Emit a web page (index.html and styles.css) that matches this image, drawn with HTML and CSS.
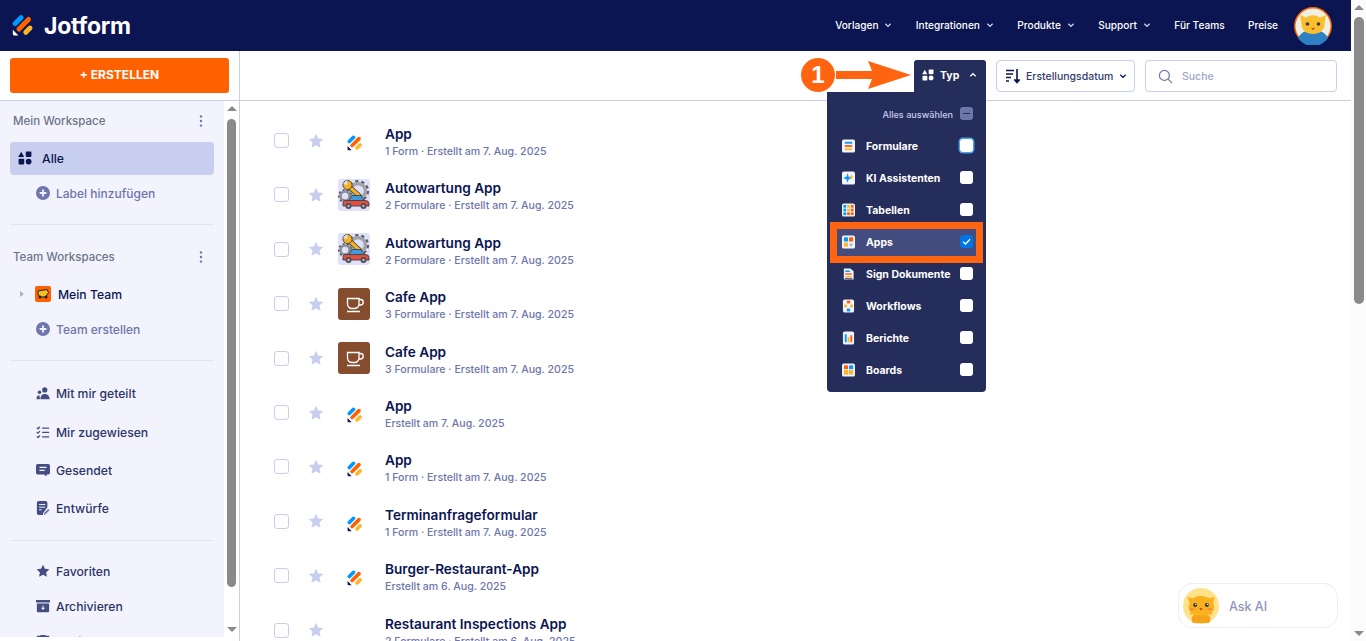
FILE: index.html
```html
<!DOCTYPE html>
<html lang="de">
<head>
<meta charset="utf-8">
<title>Jotform – Meine Apps</title>
<link rel="stylesheet" href="styles.css">
</head>
<body>
<svg class="defs" aria-hidden="true">
  <defs>
    <symbol id="logo" viewBox="0 0 22 22">
      <path d="M3.200 9 9 3.200" stroke="#0099ff" stroke-width="5" stroke-linecap="round" fill="none"/>
      <path d="M7 14.500 16.500 5" stroke="#ff6100" stroke-width="5" stroke-linecap="round" fill="none"/>
      <path d="M13.800 17.800 18 13.600" stroke="#ffb629" stroke-width="5" stroke-linecap="round" fill="none"/>
      <path d="M.8 15.200 6.400 20.900H2.200A1.400 1.400 0 0 1 .8 19.500Z" fill="currentColor"/>
    </symbol>
    <symbol id="star" viewBox="0 0 16 16">
      <path d="M8 .8l2.200 4.700 5.100.6-3.800 3.500 1 5.100L8 12.200l-4.500 2.500 1-5.100L.7 6.100l5.100-.6z" fill="currentColor"/>
    </symbol>
    <symbol id="shapes" viewBox="0 0 14 14">
      <path d="M3.200.8 6.200 6H.2z" fill="currentColor"/>
      <rect x="7.800" y=".6" width="5.600" height="5.400" rx="1" fill="currentColor"/>
      <rect x=".6" y="7.800" width="5.600" height="5.600" rx="1" fill="currentColor"/>
      <circle cx="10.600" cy="10.600" r="2.900" fill="currentColor"/>
    </symbol>
    <symbol id="plus" viewBox="0 0 14 14">
      <circle cx="7" cy="7" r="7" fill="#6e76aa"/>
      <path d="M7 3.600v6.800M3.600 7h6.800" stroke="#f3f3fe" stroke-width="1.800"/>
    </symbol>
    <symbol id="kebab" viewBox="0 0 4 14">
      <circle cx="2" cy="2.400" r="1.200" fill="#6e76aa"/><circle cx="2" cy="7" r="1.200" fill="#6e76aa"/><circle cx="2" cy="11.600" r="1.200" fill="#6e76aa"/>
    </symbol>
    <symbol id="chev" viewBox="0 0 8 6">
      <path d="M1.300 1.700 4 4.300 6.700 1.700" fill="none" stroke="currentColor" stroke-width="1.200"/>
    </symbol>
    <symbol id="cat" viewBox="0 0 40 40">
      <circle cx="20" cy="20" r="20" fill="#ffe28a"/>
      <path d="M12 30c-3 2-3 6-1 9h18c2-3 2-7-1-9z" fill="#f5a31a"/>
      <path d="M5 10l6 1.500a15 15 0 0 1 18 0L35 10l-1.500 7c2 3 1.500 7-.5 9l-1.500 4-3-1-2.500 3-3-2.500-3 2.500-3-2.500-3 2.500-2.500-3-3 1L8 26c-2-2-2.500-6-.5-9z" fill="#f9b11f"/>
      <circle cx="13.500" cy="19" r="2.200" fill="#3a3a4a"/><circle cx="26.500" cy="19" r="2.200" fill="#3a3a4a"/>
      <circle cx="14.200" cy="18.300" r=".7" fill="#fff"/><circle cx="27.200" cy="18.300" r=".7" fill="#fff"/>
      <path d="M18 22.500h4l-2 2.400z" fill="#a8431a"/>
      <ellipse cx="10" cy="23.500" rx="2.400" ry="1.400" fill="#f98a3c"/><ellipse cx="30" cy="23.500" rx="2.400" ry="1.400" fill="#f98a3c"/>
    </symbol>
    <symbol id="car" viewBox="0 0 32 32">
      <rect width="32" height="32" rx="3" fill="#dfe1fb"/>
      <circle cx="20" cy="12" r="9.500" fill="none" stroke="#55565e" stroke-width="3" stroke-dasharray="3 2.970"/>
      <circle cx="20" cy="12" r="7.500" fill="#dfe1fb" stroke="#a2a4aa" stroke-width="3.500"/>
      <circle cx="7" cy="17" r="6" fill="none" stroke="#55565e" stroke-width="2" stroke-dasharray="2 2.190"/>
      <circle cx="7" cy="17" r="4.500" fill="#dfe1fb" stroke="#8b8d93" stroke-width="2.500"/>
      <path d="M11 7.500 21.500 17" stroke="#3f4048" stroke-width="5" stroke-linecap="round"/>
      <path d="M11 7.500 21.500 17" stroke="#f5b21e" stroke-width="3.200" stroke-linecap="round"/>
      <circle cx="9.500" cy="6" r="4.600" fill="#f5b21e" stroke="#3f4048" stroke-width=".9"/>
      <path d="M9 1 9.500 6 5 5z" fill="#dfe1fb"/>
      <path d="M10.500 22 14 16.500h9l3.500 5.500z" fill="#3b9ddd" stroke="#3f4048" stroke-width=".9"/>
      <path d="M5 23.500Q5 21.500 8 21.500H27Q31 21.500 31 24.500V27H5z" fill="#e2503c" stroke="#3f4048" stroke-width=".9"/>
      <circle cx="10.500" cy="27" r="3" fill="#4c4d55"/><circle cx="25.500" cy="27" r="3" fill="#4c4d55"/>
      <circle cx="10.500" cy="27" r="1.200" fill="#b9bbc2"/><circle cx="25.500" cy="27" r="1.200" fill="#b9bbc2"/>
    </symbol>
    <symbol id="cafe" viewBox="0 0 32 32">
      <rect width="32" height="32" rx="3" fill="#854c2e"/>
      <path d="M9.500 10.500h11.500v5.500a4.500 4.500 0 0 1-4.500 4.500h-2.500a4.500 4.500 0 0 1-4.500-4.500zM21 11.500h1.500a2.300 2.300 0 0 1 0 5.500H21M9 23.500h13" fill="none" stroke="#fff" stroke-width="1.300"/>
    </symbol>
    <symbol id="m-form" viewBox="0 0 14 14">
      <rect width="14" height="14" rx="2" fill="#f3f3fe"/>
      <path d="M3 3.500h8" stroke="#0099ff" stroke-width="2"/><path d="M3 7h8" stroke="#ff6100" stroke-width="2"/><path d="M3 10.500h8" stroke="#ffb629" stroke-width="2"/>
    </symbol>
    <symbol id="m-ai" viewBox="0 0 14 14">
      <rect width="14" height="14" rx="2" fill="#f3f3fe"/>
      <path d="M6 2 7.300 5.700 11 7 7.300 8.300 6 12 4.700 8.300 1 7 4.700 5.700z" fill="#0099ff"/>
      <path d="M10 3 10.800 5.200 13 6 10.800 6.800 10 9 9.200 6.800 7 6 9.200 5.200z" fill="#ffb629"/>
    </symbol>
    <symbol id="m-table" viewBox="0 0 14 14">
      <rect width="14" height="14" rx="2" fill="#f3f3fe"/>
      <g fill="#ffb629"><rect x="5.500" y="1.500" width="3" height="3"/><rect x="5.500" y="5.500" width="3" height="3"/></g>
      <g fill="#0099ff"><rect x="1.500" y="1.500" width="3" height="3"/><rect x="1.500" y="5.500" width="3" height="3"/><rect x="1.500" y="9.500" width="3" height="3"/></g>
      <g fill="#ff6100"><rect x="9.500" y="1.500" width="3" height="3"/><rect x="9.500" y="5.500" width="3" height="3"/><rect x="9.500" y="9.500" width="3" height="3"/><rect x="5.500" y="9.500" width="3" height="3"/></g>
    </symbol>
    <symbol id="m-apps" viewBox="0 0 14 14">
      <rect width="14" height="14" rx="2" fill="#f3f3fe"/>
      <rect x="2" y="2" width="4.500" height="4.500" rx=".6" fill="#0099ff"/><rect x="7.500" y="2" width="4.500" height="4.500" rx=".6" fill="#ff6100"/>
      <rect x="2" y="7.500" width="4.500" height="4.500" rx=".6" fill="#ffb629"/><path d="M9.750 8v4M7.750 10h4" stroke="#a9aecb" stroke-width="1.200"/>
    </symbol>
    <symbol id="m-sign" viewBox="0 0 14 14">
      <path d="M2 1h7l3.500 3v9H2z" fill="#f3f3fe"/>
      <path d="M3.500 4h5" stroke="#0099ff" stroke-width="1.600"/><path d="M3.500 7h7" stroke="#ff6100" stroke-width="1.600"/><path d="M3.500 10h7" stroke="#ffb629" stroke-width="1.600"/><path d="M3 12.300c2-1.500 4 1 8-.5" stroke="#0a1551" stroke-width=".9" fill="none"/>
    </symbol>
    <symbol id="m-flow" viewBox="0 0 14 14">
      <rect x="1" width="12" height="14" rx="2" fill="#f3f3fe"/>
      <rect x="5.200" y="1.200" width="3.600" height="3" fill="#ff6100"/><rect x="2.300" y="5.500" width="3" height="3" fill="#ffb629"/><rect x="8.700" y="5.500" width="3" height="3" fill="#ffb629"/><rect x="5.200" y="9.800" width="3.600" height="3" fill="#0099ff"/>
    </symbol>
    <symbol id="m-report" viewBox="0 0 14 14">
      <rect x="1" width="12" height="14" rx="2" fill="#f3f3fe"/>
      <rect x="3" y="3" width="2" height="8.500" fill="#0099ff"/><rect x="6" y="6" width="2" height="5.500" fill="#ffb629"/><rect x="9" y="4" width="2" height="7.500" fill="#ff6100"/>
    </symbol>
    <symbol id="m-board" viewBox="0 0 14 14">
      <rect width="14" height="14" rx="2" fill="#f3f3fe"/>
      <rect x="2" y="2" width="4.500" height="4" fill="#ff6100"/><rect x="7.500" y="2" width="4.500" height="4" fill="#0099ff"/><rect x="2" y="7" width="4.500" height="5" fill="#ffb629"/><rect x="7.500" y="7" width="4.500" height="5" fill="#ffb629"/>
    </symbol>
  </defs>
</svg>

<div class="page">
  <div class="main">
    <header class="topbar">
      <div class="brand">
        <svg class="brand-logo"><use href="#logo"/></svg>
        <span class="brand-name">Jotform</span>
      </div>
      <nav class="topnav">
        <a class="topnav-link">Vorlagen <svg class="chev"><use href="#chev"/></svg></a>
        <a class="topnav-link">Integrationen <svg class="chev"><use href="#chev"/></svg></a>
        <a class="topnav-link">Produkte <svg class="chev"><use href="#chev"/></svg></a>
        <a class="topnav-link">Support <svg class="chev"><use href="#chev"/></svg></a>
        <a class="topnav-link">Für Teams</a>
        <a class="topnav-link">Preise</a>
      </nav>
      <div class="avatar">
        <svg viewBox="0 0 38 38" class="avatar-svg">
          <circle cx="19" cy="19" r="18.200" fill="#eef0e4" stroke="#ff6100" stroke-width="1.400"/>
          <path d="M4 31c3-6 9-8 15-8s12 2 15 8a18 18 0 0 1-30 0Z" fill="#2f7fc4"/>
          <path d="M6 8l6 2.500a13 13 0 0 1 14 0L32 8l-1.500 9c.5 6-5 10-11.500 10S7 23 7.500 17Z" fill="#fbbf2d"/>
          <circle cx="13.500" cy="17" r="1.800" fill="#3a3a4a"/><circle cx="24.500" cy="17" r="1.800" fill="#3a3a4a"/>
          <path d="M17 21h4l-2 2z" fill="#a8431a"/>
        </svg>
      </div>
    </header>

    <div class="workspace">
      <aside class="sidebar">
        <div class="create-wrap"><button class="create-btn">+ ERSTELLEN</button></div>
        <div class="side-body">
          <div class="side-nav">
            <div class="side-head"><span>Mein Workspace</span><svg class="kebab"><use href="#kebab"/></svg></div>
            <div class="side-active"><svg class="side-active-icon"><use href="#shapes"/></svg>Alle</div>
            <div class="side-add"><svg class="side-icon-sm"><use href="#plus"/></svg>Label hinzufügen</div>
            <hr class="side-rule rule-a">
            <div class="side-head head-team"><span>Team Workspaces</span><svg class="kebab"><use href="#kebab"/></svg></div>
            <div class="side-team">
              <span class="caret"></span>
              <svg class="team-icon" viewBox="0 0 16 16"><rect width="16" height="16" rx="2" fill="#ff6100"/><path d="M3 5l9-1.500 1.500 3-3 4.500H5L3 8z" fill="#f5c21e" stroke="#222" stroke-width="1"/><circle cx="5" cy="11" r="1.500" fill="#222"/><circle cx="11" cy="11" r="1.500" fill="#222"/></svg>
              Mein Team
            </div>
            <div class="side-add add-team"><svg class="side-icon-sm"><use href="#plus"/></svg>Team erstellen</div>
            <hr class="side-rule rule-b">
            <div class="side-link link-shared">
              <svg class="side-icon" viewBox="0 0 16 16"><circle cx="10" cy="4.500" r="3" fill="#454e80"/><path d="M5 15c0-4 2-6 5-6s5.500 2 5.500 6z" fill="#454e80"/><circle cx="4" cy="7" r="2" fill="#454e80"/><path d="M.5 15c0-3 1-4.500 3.500-4.500l.5 4.500z" fill="#454e80"/></svg>
              Mit mir geteilt
            </div>
            <div class="side-link link-first">
              <svg class="side-icon" viewBox="0 0 16 16"><path d="M1 3l1.300 1.300L4.500 2M1 8l1.300 1.300L4.500 7M1 13l1.300 1.300L4.500 12M7 3.500h8M7 8.500h8M7 13.500h8" fill="none" stroke="#454e80" stroke-width="1.400"/></svg>
              Mir zugewiesen
            </div>
            <div class="side-link link-tall">
              <svg class="side-icon" viewBox="0 0 16 16"><path d="M2 1h12a2 2 0 0 1 2 2v8a2 2 0 0 1-2 2h-2v2.500L9 13H2a2 2 0 0 1-2-2V3a2 2 0 0 1 2-2Z" fill="#454e80"/><path d="M4 5h8M4 8.500h6" stroke="#f3f3fe" stroke-width="1.300"/></svg>
              Gesendet
            </div>
            <div class="side-link link-tall">
              <svg class="side-icon" viewBox="0 0 16 16"><path d="M3 0h8a2 2 0 0 1 2 2v5l-5 7v2H3a2 2 0 0 1-2-2V2a2 2 0 0 1 2-2Z" fill="#454e80"/><path d="M3.500 4h7M3.500 7h7M3.500 10h3" stroke="#f3f3fe" stroke-width="1.100"/><path d="M9 14l5-5 1.500 1.500-5 5H9z" fill="#6e76aa"/></svg>
              Entwürfe
            </div>
            <hr class="side-rule rule-c">
            <div class="side-link">
              <svg class="side-icon" viewBox="0 0 16 16"><use href="#star" color="#454e80"/></svg>
              Favoriten
            </div>
            <div class="side-link link-archive">
              <svg class="side-icon" viewBox="0 0 16 16"><rect y="1" width="16" height="3" rx=".5" fill="#454e80"/><path d="M1 5h14v9a1 1 0 0 1-1 1H2a1 1 0 0 1-1-1z" fill="#454e80"/><path d="M8 7.500v4M6.200 10 8 11.800 9.800 10" stroke="#f3f3fe" stroke-width="1.200" fill="none"/></svg>
              Archivieren
            </div>
            <div class="side-link link-archive">
              <svg class="side-icon" viewBox="0 0 16 16"><path d="M5 2V1h6v1h4v2H1V2z" fill="#454e80"/><path d="M2 5h12l-1 11H3z" fill="#454e80"/></svg>
              Papierkorb
            </div>
          </div>
          <div class="scrollbar side-scrollbar">
            <span class="arrow-up"></span>
            <span class="thumb side-thumb"></span>
            <span class="arrow-down"></span>
          </div>
        </div>
      </aside>

      <section class="content">
        <div class="toolbar">
          <div class="type-wrap">
            <button class="type-btn"><svg class="type-icon"><use href="#shapes"/></svg>Typ<svg class="chev chev-up"><use href="#chev"/></svg></button>
            <div class="type-menu">
              <div class="menu-all"><span>Alles auswählen</span><span class="box box-mixed"></span></div>
              <div class="menu-row"><svg class="menu-icon"><use href="#m-form"/></svg><span class="menu-label">Formulare</span><span class="box box-focus"></span></div>
              <div class="menu-row"><svg class="menu-icon"><use href="#m-ai"/></svg><span class="menu-label">KI Assistenten</span><span class="box"></span></div>
              <div class="menu-row"><svg class="menu-icon"><use href="#m-table"/></svg><span class="menu-label">Tabellen</span><span class="box"></span></div>
              <div class="menu-row menu-row-on"><svg class="menu-icon"><use href="#m-apps"/></svg><span class="menu-label">Apps</span><span class="box box-on"><svg viewBox="0 0 13 13" class="box-check"><path d="M3 6.800 5.500 9 10 4.200" fill="none" stroke="#fff" stroke-width="1.300"/></svg></span></div>
              <div class="menu-row"><svg class="menu-icon"><use href="#m-sign"/></svg><span class="menu-label">Sign Dokumente</span><span class="box"></span></div>
              <div class="menu-row"><svg class="menu-icon"><use href="#m-flow"/></svg><span class="menu-label">Workflows</span><span class="box"></span></div>
              <div class="menu-row"><svg class="menu-icon"><use href="#m-report"/></svg><span class="menu-label">Berichte</span><span class="box"></span></div>
              <div class="menu-row"><svg class="menu-icon"><use href="#m-board"/></svg><span class="menu-label">Boards</span><span class="box"></span></div>
              <span class="highlight"></span>
            </div>
            <div class="callout">
              <span class="callout-num">1</span>
              <svg class="callout-arrow" viewBox="0 0 75 28"><path d="M0 10h36L32 0l43 14-43 14 4-10H0z" fill="#ff6511"/></svg>
            </div>
          </div>
          <button class="sort-btn">
            <svg class="sort-icon" viewBox="0 0 16 16"><path d="M1 2.500h8M1 6h7M1 9.500h5M1 13h3" stroke="#0a1551" stroke-width="1.500"/><path d="M12 1v13M9.300 11.500 12 14.500l2.700-3" stroke="#0a1551" stroke-width="1.600" fill="#0a1551"/></svg>
            Erstellungsdatum<svg class="chev chev-dark"><use href="#chev"/></svg>
          </button>
          <div class="search">
            <svg class="search-icon" viewBox="0 0 16 16"><circle cx="6.800" cy="6.800" r="5.300" fill="none" stroke="#6e76aa" stroke-width="1.300"/><path d="M10.800 10.800 15 15" stroke="#6e76aa" stroke-width="1.300"/></svg>
            <span>Suche</span>
          </div>
        </div>

        <div class="list">
          <div class="row"><span class="check"></span><svg class="row-star"><use href="#star"/></svg><svg class="row-logo"><use href="#logo"/></svg><div class="row-text"><div class="row-title">App</div><div class="row-sub">1 Form · Erstellt am 7. Aug. 2025</div></div></div>
          <div class="row"><span class="check"></span><svg class="row-star"><use href="#star"/></svg><svg class="row-img"><use href="#car"/></svg><div class="row-text"><div class="row-title">Autowartung App</div><div class="row-sub">2 Formulare · Erstellt am 7. Aug. 2025</div></div></div>
          <div class="row"><span class="check"></span><svg class="row-star"><use href="#star"/></svg><svg class="row-img"><use href="#car"/></svg><div class="row-text"><div class="row-title">Autowartung App</div><div class="row-sub">2 Formulare · Erstellt am 7. Aug. 2025</div></div></div>
          <div class="row"><span class="check"></span><svg class="row-star"><use href="#star"/></svg><svg class="row-img"><use href="#cafe"/></svg><div class="row-text"><div class="row-title">Cafe App</div><div class="row-sub">3 Formulare · Erstellt am 7. Aug. 2025</div></div></div>
          <div class="row"><span class="check"></span><svg class="row-star"><use href="#star"/></svg><svg class="row-img"><use href="#cafe"/></svg><div class="row-text"><div class="row-title">Cafe App</div><div class="row-sub">3 Formulare · Erstellt am 7. Aug. 2025</div></div></div>
          <div class="row"><span class="check"></span><svg class="row-star"><use href="#star"/></svg><svg class="row-logo"><use href="#logo"/></svg><div class="row-text"><div class="row-title">App</div><div class="row-sub">Erstellt am 7. Aug. 2025</div></div></div>
          <div class="row"><span class="check"></span><svg class="row-star"><use href="#star"/></svg><svg class="row-logo"><use href="#logo"/></svg><div class="row-text"><div class="row-title">App</div><div class="row-sub">1 Form · Erstellt am 7. Aug. 2025</div></div></div>
          <div class="row"><span class="check"></span><svg class="row-star"><use href="#star"/></svg><svg class="row-logo"><use href="#logo"/></svg><div class="row-text"><div class="row-title">Terminanfrageformular</div><div class="row-sub">1 Form · Erstellt am 7. Aug. 2025</div></div></div>
          <div class="row"><span class="check"></span><svg class="row-star"><use href="#star"/></svg><svg class="row-logo"><use href="#logo"/></svg><div class="row-text"><div class="row-title">Burger-Restaurant-App</div><div class="row-sub">Erstellt am 6. Aug. 2025</div></div></div>
          <div class="row"><span class="check"></span><svg class="row-star"><use href="#star"/></svg><span class="row-blank"></span><div class="row-text"><div class="row-title">Restaurant Inspections App</div><div class="row-sub">2 Formulare · Erstellt am 6. Aug. 2025</div></div></div>
        </div>
      </section>
    </div>
  </div>

  <div class="scrollbar page-scrollbar">
    <span class="arrow-up"></span>
    <span class="thumb page-thumb"></span>
    <span class="arrow-down"></span>
  </div>
</div>

<div class="ask-ai"><svg class="ask-cat"><use href="#cat"/></svg><span class="ask-label">Ask AI</span></div>
</body>
</html>
```

FILE: styles.css
```css
* { box-sizing: border-box; }
html, body { margin: 0; height: 641px; overflow: hidden; }
body { font-family: Inter, "Open Sans", sans-serif; color: #0a1551; background: #fff; position: relative; }
button { font-family: inherit; cursor: pointer; }
.defs { width: 0; height: 0; position: absolute; }

.page { display: flex; height: 641px; }
.main { width: 1351px; display: flex; flex-direction: column; height: 641px; overflow: hidden; }

.topbar { height: 51px; background: #0a1551; display: flex; align-items: center; padding: 0 19px 0 12px; flex: none; }
.brand { display: flex; align-items: center; gap: 10px; color: #fff; }
.brand-logo { width: 22px; height: 23px; color: #fff; }
.brand-name { font-size: 23px; font-weight: 700; letter-spacing: -.25px; line-height: 26px; }
.topnav { margin-left: auto; display: flex; align-items: center; gap: 23.4px; padding-bottom: 1px; }
.topnav-link { color: #fff; font-size: 10.1px; font-weight: 500; display: flex; align-items: center; gap: 6px; white-space: nowrap; }
.chev { width: 8px; height: 6px; color: #c8ceed; }
.avatar { margin-left: 16px; width: 38px; height: 38px; }
.avatar-svg { width: 38px; height: 38px; display: block; }

.workspace { flex: 1; display: flex; min-height: 0; }
.sidebar { width: 240px; flex: none; border-right: 1px solid #c8ceed; display: flex; flex-direction: column; }
.create-wrap { height: 50px; padding: 7px 10px 0; border-bottom: 1px solid #c8ceed; flex: none; }
.create-btn { width: 219px; height: 35px; background: #ff6100; color: #fff; border: 0; border-radius: 3px; font-size: 12px; font-weight: 700; padding: 0 0 2px; }
.side-body { flex: 1; display: flex; min-height: 0; height: 536px; margin-bottom: 4px; }
.side-nav { width: 224px; background: #f3f3fe; padding: 0 10px; overflow: hidden; }
.side-head { height: 20px; margin: 10px 0 11px; display: flex; align-items: center; justify-content: space-between; padding: 0 11px 0 3px; font-size: 11.5px; font-weight: 500; color: #6c7386; }
.head-team { margin: 22px 0 0; }
.kebab { width: 4px; height: 14px; }
.side-active { height: 33px; background: #c8ceed; border-radius: 4px; display: flex; align-items: center; gap: 10px; padding: 0 0 1px 8px; font-size: 12.2px; font-weight: 500; }
.side-active-icon { width: 14px; height: 14px; color: #0a1551; }
.side-add { height: 18px; margin-top: 9px; display: flex; align-items: center; gap: 6px; padding-left: 26px; color: #6e76aa; font-size: 12px; font-weight: 500; }
.add-team { margin-top: 17px; }
.side-icon-sm { width: 14px; height: 14px; }
.side-rule { border: 0; border-top: 1px solid #e3e5ec; margin: 0; }
.rule-a { margin-top: 22px; }
.rule-b { margin-top: 22px; }
.rule-c { margin-top: 23px; margin-bottom: 21px; }
.side-team { height: 18px; margin-top: 18px; display: flex; align-items: center; padding-left: 10px; font-size: 12.2px; font-weight: 500; }
.caret { width: 0; height: 0; border-left: 4px solid #a9aecb; border-top: 3px solid transparent; border-bottom: 3px solid transparent; margin-right: 11px; }
.team-icon { width: 16px; height: 16px; margin-right: 7px; }
.side-link { height: 18px; display: flex; align-items: center; gap: 6px; padding-left: 26px; font-size: 12.2px; font-weight: 500; color: #2c3566; }
.link-shared { margin-top: 23px; }
.link-first { margin-top: 21px; }
.link-tall { margin-top: 20px; }
.link-archive { margin-top: 17px; }
.side-icon { width: 14px; height: 14px; flex: none; }

.scrollbar { width: 15px; flex: none; background: #fff; display: flex; flex-direction: column; align-items: center; }
.side-scrollbar { padding-top: 5px; }
.arrow-up { width: 0; height: 0; border-left: 5px solid transparent; border-right: 5px solid transparent; border-bottom: 5px solid #8a8a8a; flex: none; }
.arrow-down { width: 0; height: 0; border-left: 5px solid transparent; border-right: 5px solid transparent; border-top: 5px solid #8a8a8a; flex: none; margin-top: auto; margin-bottom: 5px; }
.thumb { width: 9px; background: #8a8a8a; border-radius: 5px; flex: none; }
.side-thumb { height: 468px; margin-top: 8px; }
.page-scrollbar { background: #fbfbfb; padding-top: 5px; }
.page-thumb { height: 287px; margin-top: 7px; width: 10px; }

.content { flex: 1; display: flex; flex-direction: column; min-width: 0; }
.toolbar { height: 50px; flex: none; border-bottom: 1px solid #c8ceed; padding: 9px 14px 0 0; display: flex; justify-content: flex-end; align-items: flex-start; gap: 10px; }
.type-wrap { position: relative; width: 72px; }
.type-btn { width: 72px; height: 40px; border: 0; background: #252d5b; border-radius: 3px 3px 0 0; color: #fff; font-size: 10.5px; font-weight: 700; display: flex; align-items: center; padding: 0 0 10px 8px; }
.type-icon { width: 12px; height: 12px; color: #fff; margin-right: 6px; }
.chev-up { transform: rotate(180deg); color: #fff; margin-left: 10px; }
.type-menu { position: absolute; top: 32px; right: 0; width: 159px; height: 300px; background: #252d5b; border-radius: 0 0 4px 4px; padding: 6px 0 0; z-index: 5; }
.menu-all { height: 32px; display: flex; align-items: center; justify-content: flex-end; gap: 7px; padding-right: 13px; color: #c8ceed; font-size: 9.1px; font-weight: 500; }
.menu-row { height: 32px; display: flex; align-items: center; padding: 0 13px 0 15px; color: #fff; font-size: 10.5px; font-weight: 700; }
.menu-row-on { background: #434c7e; margin: 0 10px; padding: 0 3px 0 5px; }
.menu-icon { width: 13px; height: 14px; flex: none; margin-right: 11px; }
.menu-label { flex: 1; white-space: nowrap; }
.box { width: 13px; height: 13px; border-radius: 3px; background: #fff; flex: none; display: block; margin-bottom: 1px; }
.box-mixed { background: #6e76aa; position: relative; }
.box-mixed::after { content: ""; position: absolute; left: 3px; right: 3px; top: 6px; height: 1px; background: #252d5b; }
.box-focus { box-shadow: 0 0 0 1.5px #4c9be8; }
.box-on { background: #0075e3; }
.box-check { width: 13px; height: 13px; display: block; }
.highlight { position: absolute; left: 3px; top: 130px; width: 153px; height: 41px; border: 7px solid #ff6511; pointer-events: none; }
.callout { position: absolute; left: -113px; top: -2px; display: flex; align-items: center; }
.callout-num { width: 34px; height: 34px; border-radius: 50%; background: #ff6511; color: #fff; font-size: 24px; font-weight: 700; display: flex; align-items: center; justify-content: center; font-family: "Liberation Sans", sans-serif; }
.callout-arrow { width: 75px; height: 28px; margin-left: 1px; }

.sort-btn { width: 139px; height: 32px; background: #fff; border: 1px solid #c8ceed; border-radius: 4px; display: flex; align-items: center; padding: 0 0 0 8px; font-size: 10.5px; font-weight: 500; color: #343c6a; white-space: nowrap; }
.sort-icon { width: 16px; height: 16px; margin-right: 5px; flex: none; }
.chev-dark { color: #0a1551; margin-left: 6px; }
.search { width: 192px; height: 32px; border: 1px solid #c8ceed; border-radius: 4px; display: flex; align-items: center; padding-left: 12px; gap: 9px; color: #a0a6c8; font-size: 10.5px; font-weight: 500; }
.search-icon { width: 15px; height: 15px; }

.list { padding: 12.4px 0 0 34px; overflow: hidden; flex: 1; }
.row { height: 54.4px; display: flex; align-items: center; }
.check { width: 15px; height: 15px; border: 1px solid #c8ceed; border-radius: 3px; background: #fff; flex: none; margin-right: 19px; }
.row-star { width: 16px; height: 16px; color: #c8ceed; flex: none; margin-right: 14px; }
.row-img, .row-blank { width: 32px; height: 32px; flex: none; margin-right: 15px; }
.row-logo { width: 16px; height: 16px; flex: none; margin: 5px 22px 0 9px; color: #0a1551; }
.row-text { margin-top: 5px; }
.row-title { font-size: 13.6px; font-weight: 600; line-height: 17px; white-space: nowrap; }
.row-sub { font-size: 10.6px; font-weight: 500; color: #6e76aa; line-height: 17px; white-space: nowrap; }

.ask-ai { position: absolute; left: 1178px; top: 583px; width: 160px; height: 45px; background: #fff; border: 1px solid #eeeef2; border-radius: 14px; display: flex; align-items: center; padding-left: 4px; gap: 10px; color: #8e94bb; font-size: 12.5px; font-weight: 500; }
.ask-cat { width: 36px; height: 36px; }
.ask-label { margin-top: 1px; }
```
